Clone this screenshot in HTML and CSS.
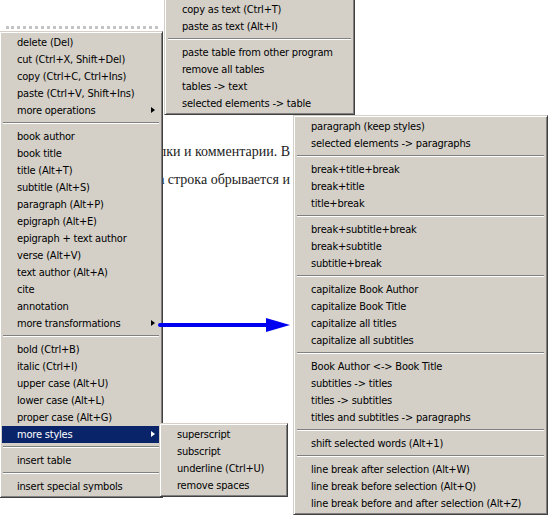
FILE: index.html
```html
<!DOCTYPE html>
<html lang="ru">

<head>
    <meta charset="UTF-8">
    <meta name="viewport" content="width=device-width, initial-scale=1.0">
    <link rel="stylesheet" href="styles.css">
    <title>Меню документа</title>
</head>

<body>
    <!-- документ под меню -->
    <div class="doc">
        <div class="dots"></div>
        <p class="line line-1">Текст книги, ссылки и комментарии. В</p>
        <p class="line line-2">Иногда одна строка обрывается и</p>
    </div>

    <div class="menu menu-main">
        <div class="item">delete (Del)</div>
        <div class="item">cut (Ctrl+X, Shift+Del)</div>
        <div class="item">copy (Ctrl+C, Ctrl+Ins)</div>
        <div class="item">paste (Ctrl+V, Shift+Ins)</div>
        <div class="item sub">more operations</div>
        <div class="sep"></div>
        <div class="item">book author</div>
        <div class="item">book title</div>
        <div class="item">title (Alt+T)</div>
        <div class="item">subtitle (Alt+S)</div>
        <div class="item">paragraph (Alt+P)</div>
        <div class="item">epigraph (Alt+E)</div>
        <div class="item">epigraph + text author</div>
        <div class="item">verse (Alt+V)</div>
        <div class="item">text author (Alt+A)</div>
        <div class="item">cite</div>
        <div class="item">annotation</div>
        <div class="item sub">more transformations</div>
        <div class="sep"></div>
        <div class="item">bold (Ctrl+B)</div>
        <div class="item">italic (Ctrl+I)</div>
        <div class="item">upper case (Alt+U)</div>
        <div class="item">lower case (Alt+L)</div>
        <div class="item">proper case (Alt+G)</div>
        <div class="item sub active">more styles</div>
        <div class="sep"></div>
        <div class="item">insert table</div>
        <div class="sep"></div>
        <div class="item">insert special symbols</div>
    </div>

    <div class="menu menu-ops">
        <div class="item">copy as text (Ctrl+T)</div>
        <div class="item">paste as text (Alt+I)</div>
        <div class="sep"></div>
        <div class="item">paste table from other program</div>
        <div class="item">remove all tables</div>
        <div class="item">tables -&gt; text</div>
        <div class="item">selected elements -&gt; table</div>
    </div>

    <div class="menu menu-trans">
        <div class="item">paragraph (keep styles)</div>
        <div class="item">selected elements -&gt; paragraphs</div>
        <div class="sep"></div>
        <div class="item">break+title+break</div>
        <div class="item">break+title</div>
        <div class="item">title+break</div>
        <div class="sep"></div>
        <div class="item">break+subtitle+break</div>
        <div class="item">break+subtitle</div>
        <div class="item">subtitle+break</div>
        <div class="sep"></div>
        <div class="item">capitalize Book Author</div>
        <div class="item">capitalize Book Title</div>
        <div class="item">capitalize all titles</div>
        <div class="item">capitalize all subtitles</div>
        <div class="sep"></div>
        <div class="item">Book Author &lt;-&gt; Book Title</div>
        <div class="item">subtitles -&gt; titles</div>
        <div class="item">titles -&gt; subtitles</div>
        <div class="item">titles and subtitles -&gt; paragraphs</div>
        <div class="sep"></div>
        <div class="item">shift selected words (Alt+1)</div>
        <div class="sep"></div>
        <div class="item">line break after selection (Alt+W)</div>
        <div class="item">line break before selection (Alt+Q)</div>
        <div class="item">line break before and after selection (Alt+Z)</div>
    </div>

    <div class="menu menu-styles">
        <div class="item">superscript</div>
        <div class="item">subscript</div>
        <div class="item">underline (Ctrl+U)</div>
        <div class="item">remove spaces</div>
    </div>

    <!-- синяя стрелка к подменю -->
    <svg class="arrow" width="140" height="24" viewBox="0 0 140 24">
        <line x1="6" y1="12" x2="116" y2="12" stroke="#0000f0" stroke-width="4" stroke-linecap="round" />
        <polygon points="112,5 136,12 112,19" fill="#0000f0" />
    </svg>
</body>

</html>
```

FILE: styles.css
```css
body {
    margin: 0;
    background-color: #fff;
    width: 548px;
    height: 515px;
    overflow: hidden;
    position: relative;
}

.doc {
    width: 290px;
    padding-top: 26px;
    font-family: "Liberation Serif", serif;
    font-size: 14px;
    color: #222;
}

.dots {
    width: 152px;
    margin-left: 6px;
    border-top: 3px dotted #c4c4c4;
}

.line {
    margin: 0;
    line-height: 16px;
    text-align: right;
    white-space: nowrap;
}

.line-1 {
    margin-top: 115px;
}

.line-2 {
    margin-top: 12px;
}

.menu {
    position: absolute;
    box-sizing: border-box;
    background-color: #d4d0c8;
    border: 1px solid;
    border-color: #d4d0c8 #404040 #404040 #d4d0c8;
    box-shadow: inset 1px 1px #fff, inset -1px -1px #808080;
    padding: 2px;
    font-family: "DejaVu Sans Condensed", "DejaVu Sans", sans-serif;
    font-stretch: condensed;
    font-size: 11px;
    letter-spacing: -0.2px;
    color: #000;
}

.menu-main {
    left: -1px;
    top: 31px;
    width: 164px;
}

.menu-ops {
    left: 164px;
    top: -2px;
    width: 191px;
}

.menu-trans {
    left: 293px;
    top: 115px;
    width: 255px;
}

.menu-styles {
    left: 159px;
    top: 423px;
    width: 129px;
}

.item {
    position: relative;
    height: 17px;
    line-height: 17px;
    padding-left: 15px;
    white-space: nowrap;
}

.item.sub::after {
    content: "";
    position: absolute;
    right: 5px;
    top: 5px;
    border-left: 4px solid #000;
    border-top: 3.5px solid transparent;
    border-bottom: 3.5px solid transparent;
}

.item.active {
    background-color: #0a246a;
    color: #fff;
}

.item.active::after {
    border-left-color: #fff;
}

.sep {
    margin: 3px 1px 4px;
    border-top: 1px solid #808080;
    border-bottom: 1px solid #fff;
}

.arrow {
    position: absolute;
    left: 154px;
    top: 313px;
}
```
